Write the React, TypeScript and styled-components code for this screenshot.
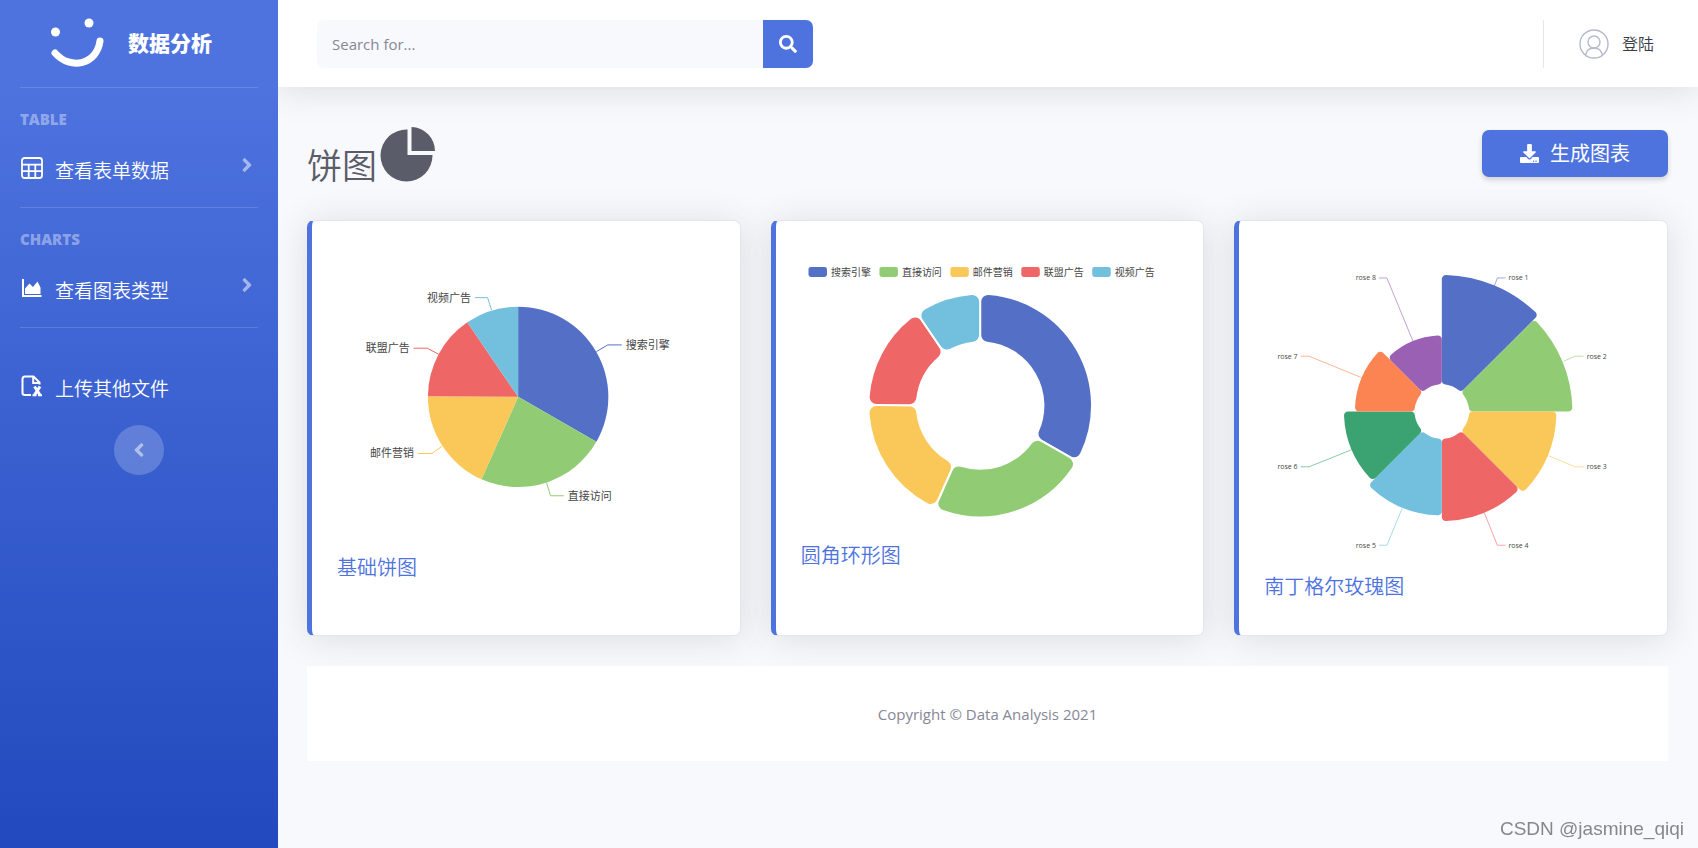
import React from "react";
import styled, { createGlobalStyle } from "styled-components";
import { FaSearch, FaDownload, FaAngleRight, FaAngleLeft } from "react-icons/fa";

const PALETTE = ["#5470c6", "#91cc75", "#fac858", "#ee6666", "#73c0de", "#3ba272", "#fc8452", "#9a60b4"];

const GlobalStyle = createGlobalStyle`
  *, *::before, *::after { box-sizing: border-box; }
  body {
    margin: 0;
    background: #f8f9fc;
    color: #858796;
    font-family: "Open Sans", "Noto Sans CJK SC", sans-serif;
    font-size: 15px;
    line-height: 24px;
  }
  a { color: inherit; text-decoration: none; }
  button, input { font: inherit; }
`;

const Page = styled.div`
  display: flex;
  min-height: 100vh;
`;

const Sidebar = styled.nav`
  position: relative;
  z-index: 1;
  flex: 0 0 278px;
  display: flex;
  flex-direction: column;
  background: linear-gradient(180deg, #4e73df 10%, #224abe 100%);
  color: #fff;
`;

const Brand = styled.a`
  display: flex;
  align-items: center;
  justify-content: center;
  gap: 24px;
  height: 87px;
  padding: 0 16px 2px 0;
  font-size: 21px;
  font-weight: 800;
`;

const Divider = styled.hr`
  width: calc(100% - 40px);
  margin: 0 20px;
  border: 0;
  border-top: 1px solid rgba(255, 255, 255, 0.15);
`;

const Group = styled.section`
  height: 119px;
  padding-top: 19px;
`;

const GroupTitle = styled.h2`
  margin: 0 20px;
  color: rgba(255, 255, 255, 0.4);
  font-size: 15px;
  font-weight: 800;
  line-height: 24px;
`;

const NavItem = styled.a`
  display: flex;
  align-items: center;
  gap: 11px;
  margin-top: 21px;
  padding: 0 20px;
  font-size: 19px;
  font-weight: 350;
  line-height: 38px;
`;

const NavIcon = styled.span`
  display: flex;
  justify-content: center;
  width: 24px;
  margin-bottom: 6px;
`;

const NavArrow = styled(FaAngleRight)`
  margin: 0 0 12px auto;
  color: rgba(255, 255, 255, 0.5);
`;

const Uploads = styled.section`
  padding: 21px 0 17px;
`;

const Toggle = styled.button`
  display: flex;
  align-items: center;
  justify-content: center;
  align-self: center;
  width: 50px;
  height: 50px;
  border: 0;
  border-radius: 50%;
  background: rgba(255, 255, 255, 0.2);
  color: rgba(255, 255, 255, 0.5);
`;

const Content = styled.div`
  flex: 1;
  min-width: 0;
`;

const Topbar = styled.header`
  display: flex;
  align-items: center;
  justify-content: space-between;
  height: 87px;
  padding: 0 44px 0 39px;
  background: #fff;
  box-shadow: 0 3px 35px rgba(58, 59, 69, 0.15);
`;

const Search = styled.form`
  display: flex;
  width: 496px;
  height: 48px;
`;

const SearchInput = styled.input`
  flex: 1;
  min-width: 0;
  padding: 0 15px;
  border: 0;
  border-radius: 7px 0 0 7px;
  background: #f8f9fc;
  color: #6e707e;
  &::placeholder { color: #858796; opacity: 1; }
`;

const SearchButton = styled.button`
  display: flex;
  align-items: center;
  justify-content: center;
  width: 50px;
  border: 0;
  border-radius: 0 7px 7px 0;
  background: #4e73df;
  color: #fff;
`;

const Account = styled.a`
  display: flex;
  align-items: center;
  gap: 13px;
  height: 48px;
  padding-left: 35px;
  border-left: 1px solid #e3e6f0;
  color: #3a3b45;
  font-size: 16px;
  font-weight: 350;
`;

const Main = styled.main`
  padding: 34px 30px 30px 29px;
`;

const Heading = styled.div`
  display: flex;
  align-items: flex-start;
  justify-content: space-between;
  height: 99px;
`;

const Title = styled.h1`
  display: flex;
  align-items: flex-start;
  gap: 3px;
  margin: 0;
  color: #5a5c69;
  font-size: 35px;
  font-weight: 350;
  line-height: 90px;
  svg { margin-top: 5px; }
`;

const Generate = styled.button`
  display: flex;
  align-items: center;
  justify-content: center;
  gap: 11px;
  width: 186px;
  height: 47px;
  margin-top: 9px;
  border: 0;
  border-radius: 7px;
  background: #4e73df;
  color: #fff;
  font-size: 20px;
  box-shadow: 0 3px 5px rgba(58, 59, 69, 0.2);
`;

const Cards = styled.div`
  display: grid;
  grid-template-columns: repeat(3, minmax(0, 1fr));
  gap: 30px;
`;

const Card = styled.article`
  padding: 25px 24px 33px 25px;
  border: 1px solid #e3e6f0;
  border-left: 5px solid #4e73df;
  border-radius: 7px;
  background: #fff;
  box-shadow: 0 3px 35px rgba(58, 59, 69, 0.15);
`;

const CardLink = styled.a`
  display: block;
  color: #4e73df;
  font-size: 20px;
  font-weight: 350;
  line-height: 30px;
`;

const Chart = styled.svg`
  display: block;
  width: 100%;
  height: auto;
  fill: #464646;
`;

const Footer = styled.footer`
  position: relative;
  margin-top: 30px;
  padding: 36px 0 35px;
  background: #fff;
  text-align: center;
`;

const Watermark = styled.div`
  position: fixed;
  right: 14px;
  bottom: 7px;
  color: #85878b;
  font-family: "Liberation Sans", sans-serif;
  font-size: 19px;
  line-height: 24px;
`;

type Point = [number, number];

// Angles run clockwise from twelve o'clock, in radians.
const polar = (cx: number, cy: number, radius: number, angle: number): string =>
  `${(cx + radius * Math.sin(angle)).toFixed(2)} ${(cy - radius * Math.cos(angle)).toFixed(2)}`;

function roundedSector(cx: number, cy: number, inner: number, outer: number, from: number, to: number, corner: number) {
  const outerTurn = Math.asin(corner / (outer - corner));
  const innerTurn = Math.asin(corner / (inner + corner));
  const outerEdge = Math.sqrt((outer - corner) ** 2 - corner ** 2);
  const innerEdge = Math.sqrt((inner + corner) ** 2 - corner ** 2);
  const p = (radius: number, angle: number) => polar(cx, cy, radius, angle);
  const bend = `A${corner} ${corner} 0 0 1`;
  return [
    `M${p(innerEdge, from)}`,
    `L${p(outerEdge, from)}`,
    `${bend} ${p(outer, from + outerTurn)}`,
    `A${outer} ${outer} 0 0 1 ${p(outer, to - outerTurn)}`,
    `${bend} ${p(outerEdge, to)}`,
    `L${p(innerEdge, to)}`,
    `${bend} ${p(inner, to - innerTurn)}`,
    `A${inner} ${inner} 0 0 0 ${p(inner, from + innerTurn)}`,
    `${bend} ${p(innerEdge, from)}Z`,
  ].join("");
}

const SOURCES = [
  { name: "搜索引擎", value: 1048 },
  { name: "直接访问", value: 735 },
  { name: "邮件营销", value: 580 },
  { name: "联盟广告", value: 484 },
  { name: "视频广告", value: 300 },
];
const TOTAL = SOURCES.reduce((sum, s) => sum + s.value, 0);
const ARCS = SOURCES.map((s, i) => {
  const before = SOURCES.slice(0, i).reduce((sum, t) => sum + t.value, 0);
  return { from: (before / TOTAL) * 2 * Math.PI, to: ((before + s.value) / TOTAL) * 2 * Math.PI };
});

interface CalloutProps {
  points: Point[];
  text: string;
  color: string;
  size: number;
  gap: number;
}

function Callout({ points, text, color, size, gap }: CalloutProps) {
  const [x, y] = points[2];
  const right = x > points[1][0];
  return (
    <>
      <polyline points={points.map((p) => p.join(",")).join(" ")} fill="none" stroke={color} strokeWidth={size > 8 ? 1 : 0.6} />
      <text x={right ? x + gap : x - gap} y={y} dy="0.36em" fontSize={size} textAnchor={right ? "start" : "end"}>
        {text}
      </text>
    </>
  );
}

const PIE_LINES: Point[][] = [
  [[259.7, 105.7], [271, 99], [285, 99]],
  [[209.7, 236.7], [213.7, 250], [227, 250]],
  [[105.3, 200.3], [95, 207.7], [81, 207.7]],
  [[101.7, 108.3], [90.3, 102.3], [76.7, 102.3]],
  [[154.7, 64], [150.7, 51.7], [138, 51.7]],
];

function PieChart() {
  const cx = 181.3, cy = 151, r = 90.3;
  return (
    <Chart viewBox="0 0 379 307" role="img" aria-label="基础饼图">
      {ARCS.map(({ from, to }, i) => (
        <path key={i} fill={PALETTE[i]} d={`M${cx} ${cy}L${polar(cx, cy, r, from)}A${r} ${r} 0 0 1 ${polar(cx, cy, r, to)}Z`} />
      ))}
      {SOURCES.map((s, i) => (
        <Callout key={s.name} points={PIE_LINES[i]} text={s.name} color={PALETTE[i]} size={11} gap={4} />
      ))}
    </Chart>
  );
}

function RingChart() {
  return (
    <Chart viewBox="0 0 379 295" role="img" aria-label="圆角环形图">
      {SOURCES.map((s, i) => (
        <g key={s.name}>
          <rect x={7.5 + i * 71} y={21} width={18.5} height={10} rx={2.5} fill={PALETTE[i]} />
          <text x={30 + i * 71} y={26} dy="0.36em" fontSize={10}>{s.name}</text>
        </g>
      ))}
      {ARCS.map(({ from, to }, i) => (
        <path key={i} fill={PALETTE[i]} stroke="#fff" strokeWidth={2} d={roundedSector(179.3, 159.7, 63.3, 112, from, to, 8)} />
      ))}
    </Chart>
  );
}

const ROSES: { radius: number; line: Point[] }[] = [
  { radius: 136.7, line: [[230.6, 39.7], [233.6, 32], [241.6, 32]] },
  { radius: 130.7, line: [[300, 115.3], [311.3, 110.3], [320, 110.3]] },
  { radius: 114.7, line: [[285, 210], [311.3, 221], [320, 221]] },
  { radius: 109.7, line: [[220.6, 267.3], [233.6, 299.5], [241.6, 299.5]] },
  { radius: 104, line: [[138.3, 262.5], [123, 299.5], [115, 299.5]] },
  { radius: 98, line: [[87.6, 204], [45, 221], [36.6, 221]] },
  { radius: 87, line: [[97.6, 131.7], [45, 110.3], [36.6, 110.3]] },
  { radius: 76.3, line: [[149, 95], [123, 32], [115, 32]] },
];

function RoseChart() {
  return (
    <Chart viewBox="0 0 379 326" role="img" aria-label="南丁格尔玫瑰图">
      {ROSES.map(({ radius, line }, i) => (
        <g key={i}>
          <path fill={PALETTE[i]} d={roundedSector(178, 165.7, 27.3, radius, (i * Math.PI) / 4, ((i + 1) * Math.PI) / 4, 4)} />
          <Callout points={line} text={`rose ${i + 1}`} color={PALETTE[i]} size={7} gap={3} />
        </g>
      ))}
    </Chart>
  );
}

const SmileLogo = () => (
  <svg width="54" height="50" viewBox="0 0 54 50" fill="#fff" aria-hidden="true">
    <circle cx="5.5" cy="14" r="4.5" />
    <circle cx="39" cy="5" r="4.5" />
    <path d="M5 35C21 53 47 46 50 23" fill="none" stroke="#fff" strokeWidth="7" strokeLinecap="round" />
  </svg>
);

const TableIcon = () => (
  <svg width="22" height="22" viewBox="0 0 22 22" fill="none" stroke="#fff" strokeWidth="1.8" aria-hidden="true">
    <rect x="1" y="1" width="20" height="20" rx="2.5" />
    <path d="M1 7.7H21M1 14.2H21M7.7 7.7V21M14.3 7.7V21" />
  </svg>
);

const AreaIcon = () => (
  <svg width="20" height="18" viewBox="0 0 20 18" fill="#fff" aria-hidden="true">
    <path d="M0 0H2V16H19.5V18H0Z" />
    <path d="M3 15V9.5L7.5 4.5L11 8L15.5 2.500L18.500 8.500V15Z" />
  </svg>
);

const SheetIcon = () => (
  <svg width="22" height="22" viewBox="0 0 22 22" fill="none" stroke="#fff" strokeWidth="2" aria-hidden="true">
    <path d="M10 20H4Q1.500 20 1.500 18V4Q1.500 1.500 4 1.500H12.500L18.500 7.500V9.500M12.200 2V8H18.500" />
    <path d="M13.500 11.500L19 20M19 11.500L13.500 20" strokeWidth="3" />
    <path d="M11.500 20.200H15.500M17 20.200H21" />
  </svg>
);

const AvatarIcon = () => (
  <svg width="30" height="30" viewBox="0 0 30 30" fill="none" stroke="#b7b9cc" strokeWidth="1.4" aria-hidden="true">
    <circle cx="15" cy="15" r="14" />
    <circle cx="15" cy="13" r="6" />
    <path d="M6.500 26C7.500 21.500 11 19 15 19S22.500 21.500 23.500 26" />
  </svg>
);

const PieIcon = () => (
  <svg width="56" height="56" viewBox="0 0 56 56" fill="#5a5c69" aria-hidden="true">
    <path d="M27.500 3.500V29H52.500A26 26 0 1 1 27.500 3.500Z" />
    <path d="M31.500 1A24 24 0 0 1 55 25H31.500Z" />
  </svg>
);

export default function App() {
  return (
    <>
      <GlobalStyle />
      <Page>
        <Sidebar>
          <Brand href="#">
            <SmileLogo />
            <span>数据分析</span>
          </Brand>
          <Divider />
          <Group>
            <GroupTitle>TABLE</GroupTitle>
            <NavItem href="#">
              <NavIcon><TableIcon /></NavIcon>
              <span>查看表单数据</span>
              <NavArrow size={22} />
            </NavItem>
          </Group>
          <Divider />
          <Group>
            <GroupTitle>CHARTS</GroupTitle>
            <NavItem href="#">
              <NavIcon><AreaIcon /></NavIcon>
              <span>查看图表类型</span>
              <NavArrow size={22} />
            </NavItem>
          </Group>
          <Divider />
          <Uploads>
            <NavItem href="#">
              <NavIcon><SheetIcon /></NavIcon>
              <span>上传其他文件</span>
            </NavItem>
          </Uploads>
          <Toggle type="button" aria-label="收起菜单"><FaAngleLeft size={22} /></Toggle>
        </Sidebar>
        <Content>
          <Topbar>
            <Search onSubmit={(e) => e.preventDefault()}>
              <SearchInput type="text" placeholder="Search for..." aria-label="Search for" />
              <SearchButton type="submit" aria-label="Search"><FaSearch size={18} /></SearchButton>
            </Search>
            <Account href="#">
              <AvatarIcon />
              <span>登陆</span>
            </Account>
          </Topbar>
          <Main>
            <Heading>
              <Title>
                饼图
                <PieIcon />
              </Title>
              <Generate type="button">
                <FaDownload size={19} />
                <span>生成图表</span>
              </Generate>
            </Heading>
            <Cards>
              <Card>
                <PieChart />
                <CardLink href="#">基础饼图</CardLink>
              </Card>
              <Card>
                <RingChart />
                <CardLink href="#">圆角环形图</CardLink>
              </Card>
              <Card>
                <RoseChart />
                <CardLink href="#">南丁格尔玫瑰图</CardLink>
              </Card>
            </Cards>
            <Footer>Copyright © Data Analysis 2021</Footer>
          </Main>
        </Content>
      </Page>
      <Watermark>CSDN @jasmine_qiqi</Watermark>
    </>
  );
}
